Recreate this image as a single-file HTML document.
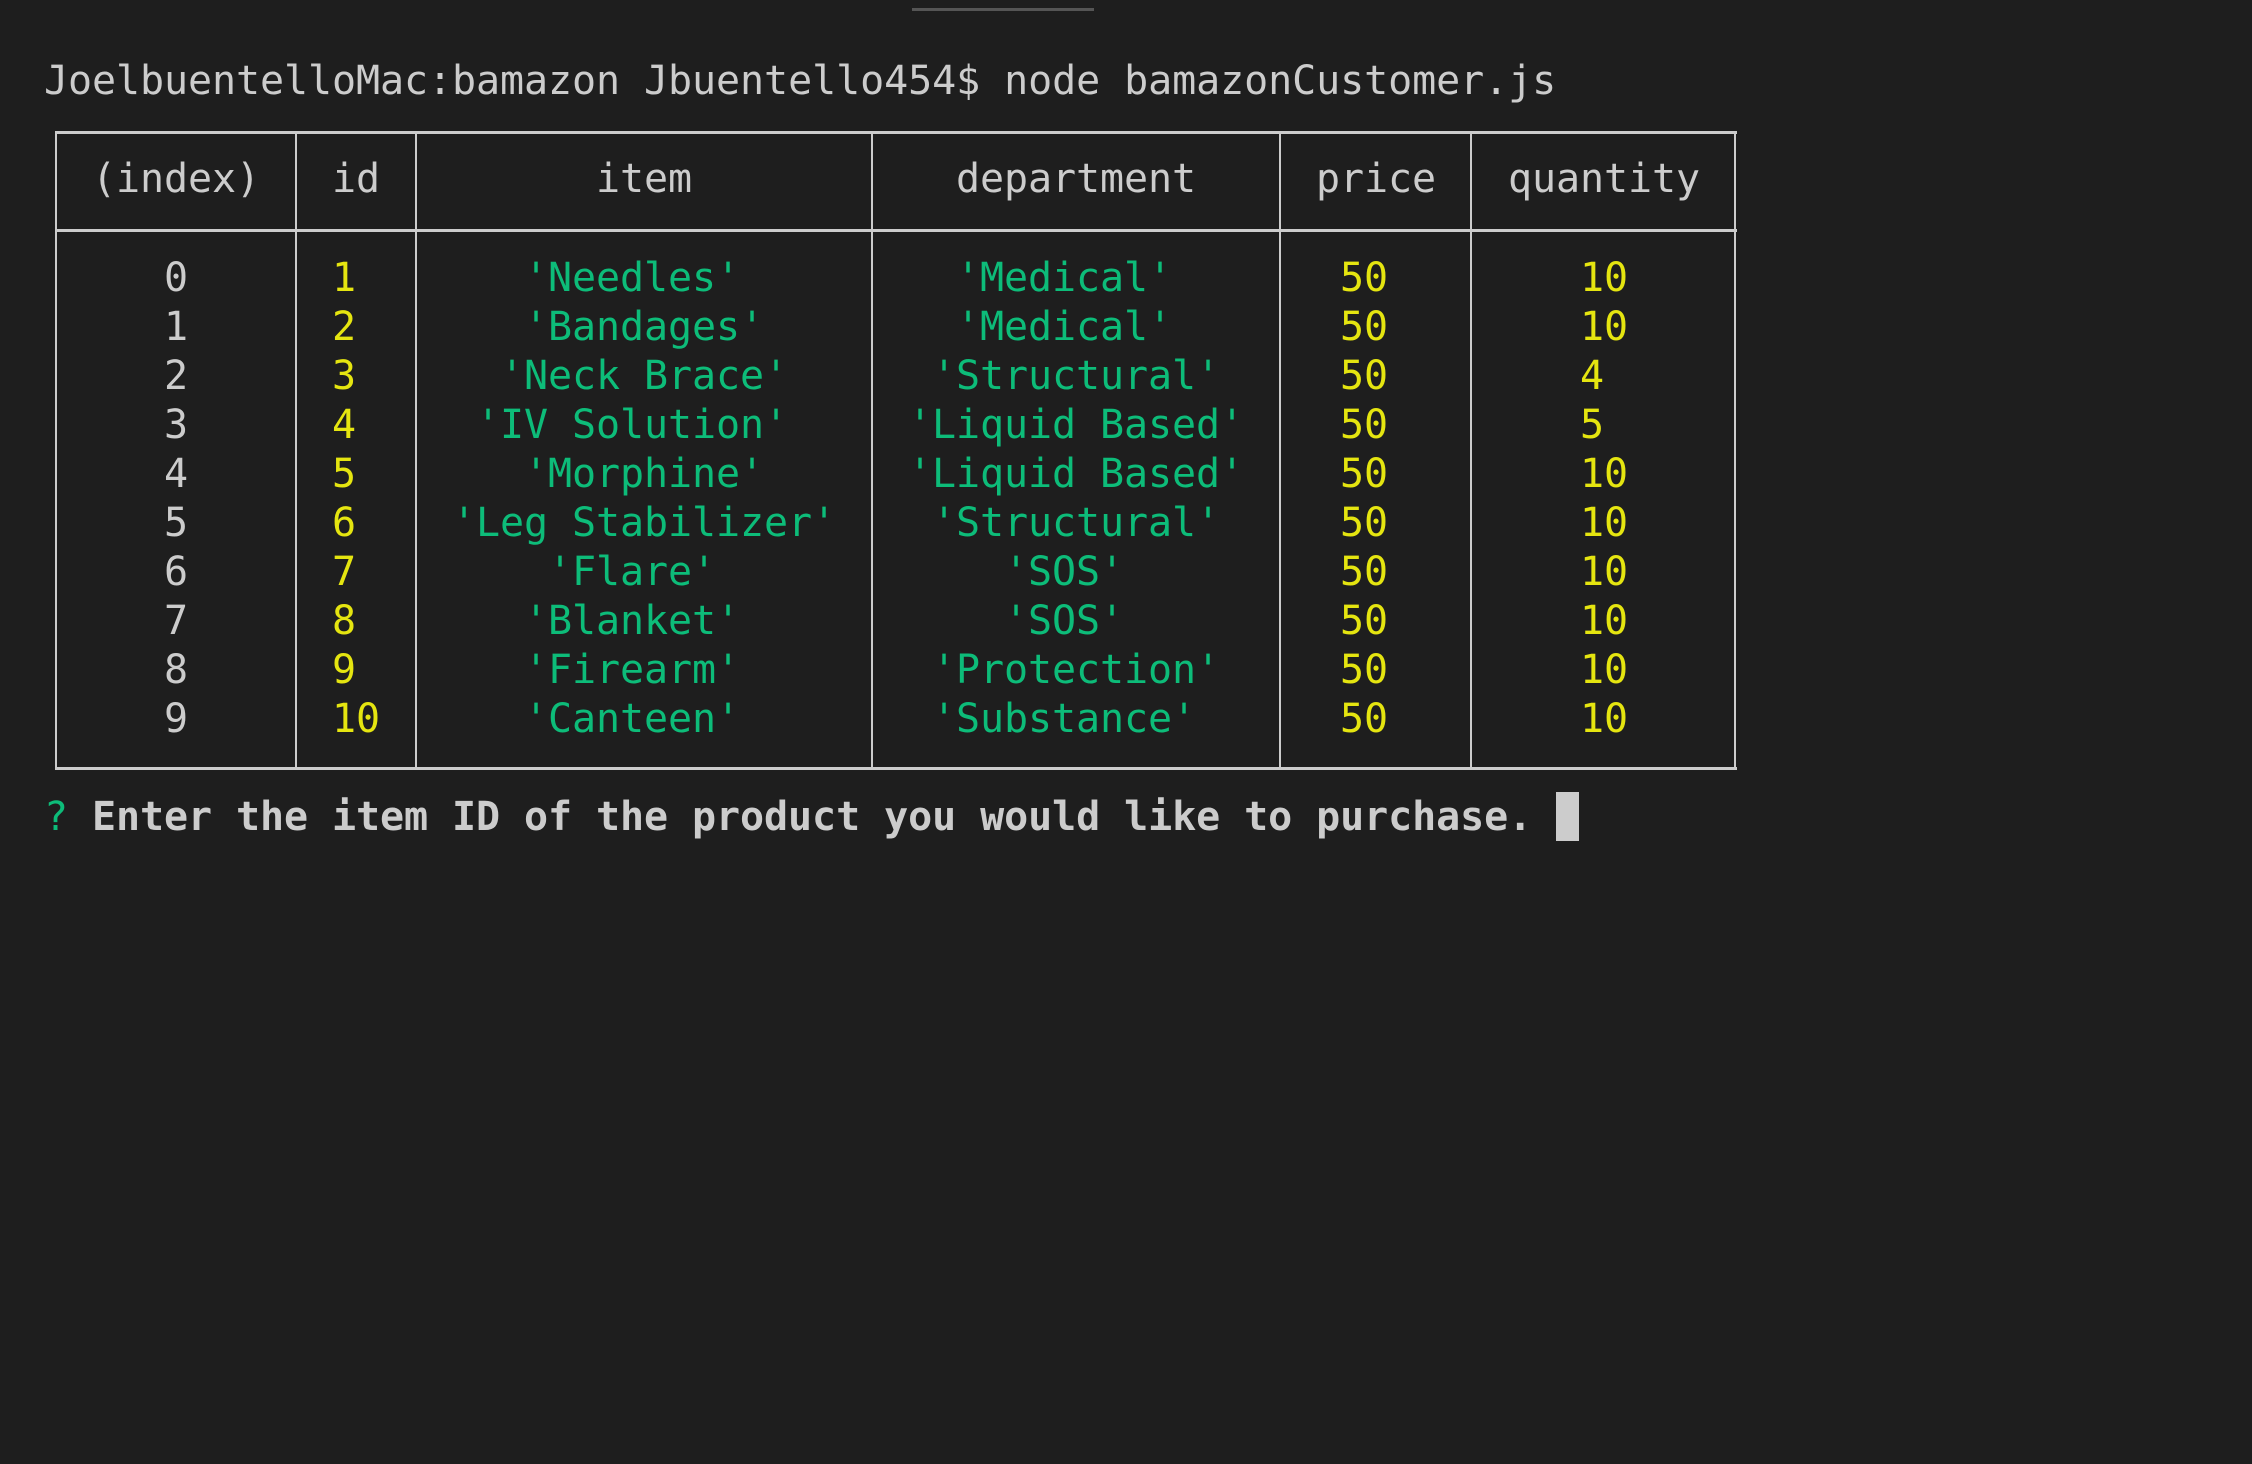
<!DOCTYPE html>
<html><head><meta charset="utf-8"><style>
html,body{margin:0;padding:0;background:#1e1e1e;width:2252px;height:1464px;overflow:hidden;position:relative}
.t{position:absolute;font-family:"DejaVu Sans Mono","Liberation Mono",monospace;font-size:40px;line-height:49px;white-space:pre;color:#cccccc;letter-spacing:-0.08px}
.y{color:#e5e510}.g{color:#0dbc79}
.h{position:absolute;background:#cccccc;height:3px;left:55px;width:1682px}
.v{position:absolute;background:#cccccc;width:2px;top:132px;height:637px}
</style></head><body>
<div style="position:absolute;left:912px;top:8px;width:182px;height:3px;background:#555"></div>
<div class="t" style="left:44px;top:57px">JoelbuentelloMac:bamazon Jbuentello454$ node bamazonCustomer.js</div>
<div class="h" style="top:131px"></div>
<div class="h" style="top:229px"></div>
<div class="h" style="top:767px"></div>
<div class="v" style="left:55px"></div>
<div class="v" style="left:295px"></div>
<div class="v" style="left:415px"></div>
<div class="v" style="left:871px"></div>
<div class="v" style="left:1279px"></div>
<div class="v" style="left:1470px"></div>
<div class="v" style="left:1734px"></div>
<div class="t" style="top:155px;left:92px">(index)</div>
<div class="t" style="top:155px;left:332px">id</div>
<div class="t" style="top:155px;left:596px">item</div>
<div class="t" style="top:155px;left:956px">department</div>
<div class="t" style="top:155px;left:1316px">price</div>
<div class="t" style="top:155px;left:1508px">quantity</div>

<div class="t" style="top:254px;left:164px">0</div><div class="t y" style="top:254px;left:332px">1</div><div class="t g" style="top:254px;left:524px">'Needles'</div><div class="t g" style="top:254px;left:956px">'Medical'</div><div class="t y" style="top:254px;left:1340px">50</div><div class="t y" style="top:254px;left:1580px">10</div>
<div class="t" style="top:303px;left:164px">1</div><div class="t y" style="top:303px;left:332px">2</div><div class="t g" style="top:303px;left:524px">'Bandages'</div><div class="t g" style="top:303px;left:956px">'Medical'</div><div class="t y" style="top:303px;left:1340px">50</div><div class="t y" style="top:303px;left:1580px">10</div>
<div class="t" style="top:352px;left:164px">2</div><div class="t y" style="top:352px;left:332px">3</div><div class="t g" style="top:352px;left:500px">'Neck Brace'</div><div class="t g" style="top:352px;left:932px">'Structural'</div><div class="t y" style="top:352px;left:1340px">50</div><div class="t y" style="top:352px;left:1580px">4</div>
<div class="t" style="top:401px;left:164px">3</div><div class="t y" style="top:401px;left:332px">4</div><div class="t g" style="top:401px;left:476px">'IV Solution'</div><div class="t g" style="top:401px;left:908px">'Liquid Based'</div><div class="t y" style="top:401px;left:1340px">50</div><div class="t y" style="top:401px;left:1580px">5</div>
<div class="t" style="top:450px;left:164px">4</div><div class="t y" style="top:450px;left:332px">5</div><div class="t g" style="top:450px;left:524px">'Morphine'</div><div class="t g" style="top:450px;left:908px">'Liquid Based'</div><div class="t y" style="top:450px;left:1340px">50</div><div class="t y" style="top:450px;left:1580px">10</div>
<div class="t" style="top:499px;left:164px">5</div><div class="t y" style="top:499px;left:332px">6</div><div class="t g" style="top:499px;left:452px">'Leg Stabilizer'</div><div class="t g" style="top:499px;left:932px">'Structural'</div><div class="t y" style="top:499px;left:1340px">50</div><div class="t y" style="top:499px;left:1580px">10</div>
<div class="t" style="top:548px;left:164px">6</div><div class="t y" style="top:548px;left:332px">7</div><div class="t g" style="top:548px;left:548px">'Flare'</div><div class="t g" style="top:548px;left:1004px">'SOS'</div><div class="t y" style="top:548px;left:1340px">50</div><div class="t y" style="top:548px;left:1580px">10</div>
<div class="t" style="top:597px;left:164px">7</div><div class="t y" style="top:597px;left:332px">8</div><div class="t g" style="top:597px;left:524px">'Blanket'</div><div class="t g" style="top:597px;left:1004px">'SOS'</div><div class="t y" style="top:597px;left:1340px">50</div><div class="t y" style="top:597px;left:1580px">10</div>
<div class="t" style="top:646px;left:164px">8</div><div class="t y" style="top:646px;left:332px">9</div><div class="t g" style="top:646px;left:524px">'Firearm'</div><div class="t g" style="top:646px;left:932px">'Protection'</div><div class="t y" style="top:646px;left:1340px">50</div><div class="t y" style="top:646px;left:1580px">10</div>
<div class="t" style="top:695px;left:164px">9</div><div class="t y" style="top:695px;left:332px">10</div><div class="t g" style="top:695px;left:524px">'Canteen'</div><div class="t g" style="top:695px;left:932px">'Substance'</div><div class="t y" style="top:695px;left:1340px">50</div><div class="t y" style="top:695px;left:1580px">10</div>

<div class="t g" style="top:793px;left:44px">?</div>
<div class="t" style="top:793px;left:92px;font-weight:bold">Enter the item ID of the product you would like to purchase.</div>
<div style="position:absolute;left:1556px;top:792px;width:23px;height:49px;background:#cccccc"></div>
</body></html>
